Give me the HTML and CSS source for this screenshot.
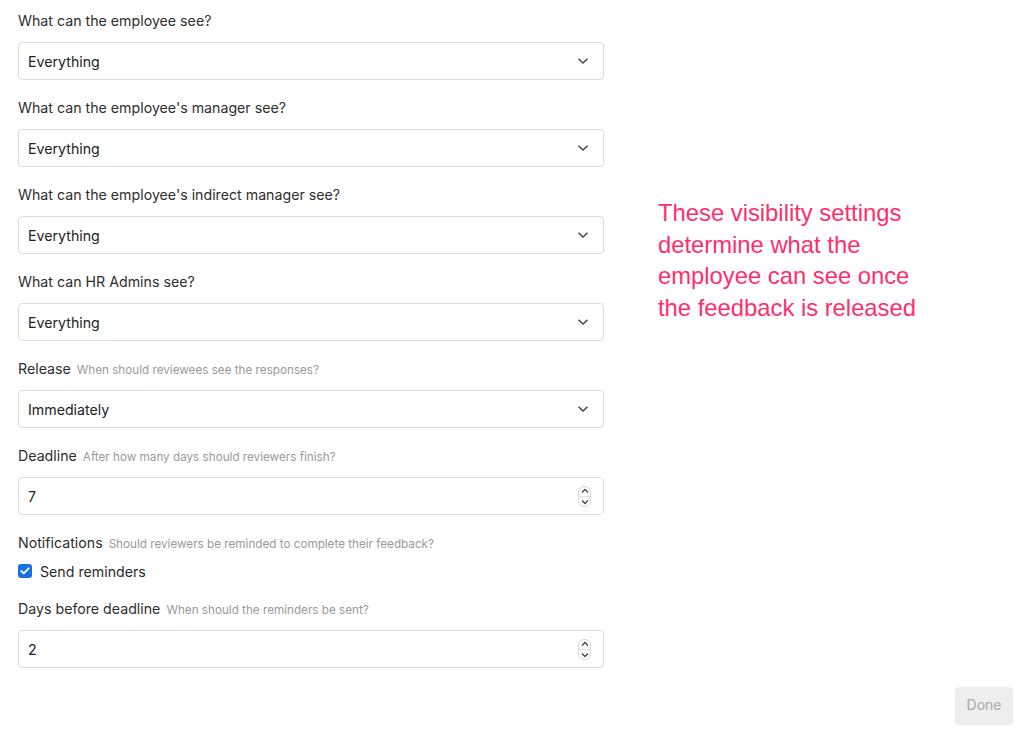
FILE: index.html
```html
<!DOCTYPE html>
<html lang="en">
<head>
<meta charset="utf-8">
<title>Visibility settings</title>
<link rel="stylesheet" href="styles.css">
</head>
<body>
<div class="page">
  <div class="main">
    <form class="form">
      <div class="field">
        <div class="label">What can the employee see?</div>
        <div class="control">
          <span class="value">Everything</span>
          <svg class="chev" width="12" height="8" viewBox="0 0 12 8"><path d="M1.5 1.8 6 6 10.5 1.8" fill="none" stroke="#444" stroke-width="1.5"/></svg>
        </div>
      </div>
      <div class="field">
        <div class="label">What can the employee's manager see?</div>
        <div class="control">
          <span class="value">Everything</span>
          <svg class="chev" width="12" height="8" viewBox="0 0 12 8"><path d="M1.5 1.8 6 6 10.5 1.8" fill="none" stroke="#444" stroke-width="1.5"/></svg>
        </div>
      </div>
      <div class="field">
        <div class="label">What can the employee's indirect manager see?</div>
        <div class="control">
          <span class="value">Everything</span>
          <svg class="chev" width="12" height="8" viewBox="0 0 12 8"><path d="M1.5 1.8 6 6 10.5 1.8" fill="none" stroke="#444" stroke-width="1.5"/></svg>
        </div>
      </div>
      <div class="field">
        <div class="label">What can HR Admins see?</div>
        <div class="control">
          <span class="value">Everything</span>
          <svg class="chev" width="12" height="8" viewBox="0 0 12 8"><path d="M1.5 1.8 6 6 10.5 1.8" fill="none" stroke="#444" stroke-width="1.5"/></svg>
        </div>
      </div>
      <div class="field">
        <div class="label">Release <span class="hint">When should reviewees see the responses?</span></div>
        <div class="control">
          <span class="value">Immediately</span>
          <svg class="chev" width="12" height="8" viewBox="0 0 12 8"><path d="M1.5 1.8 6 6 10.5 1.8" fill="none" stroke="#444" stroke-width="1.5"/></svg>
        </div>
      </div>
      <div class="field">
        <div class="label">Deadline <span class="hint">After how many days should reviewers finish?</span></div>
        <div class="control">
          <span class="value">7</span>
          <span class="stepper">
            <svg width="8" height="6" viewBox="0 0 8 6"><path d="M1 4.5 4 1.5 7 4.5" fill="none" stroke="#444" stroke-width="1.3"/></svg>
            <span class="divider"></span>
            <svg width="8" height="6" viewBox="0 0 8 6"><path d="M1 1.5 4 4.5 7 1.5" fill="none" stroke="#444" stroke-width="1.3"/></svg>
          </span>
        </div>
      </div>
      <div class="field notif">
        <div class="label">Notifications <span class="hint">Should reviewers be reminded to complete their feedback?</span></div>
        <div class="check-row">
          <span class="checkbox">
            <svg width="10" height="8" viewBox="0 0 10 8"><path d="M1.3 4 3.8 6.3 8.7 1.3" fill="none" stroke="#fff" stroke-width="1.8" stroke-linecap="round" stroke-linejoin="round"/></svg>
          </span>
          <span class="check-label">Send reminders</span>
        </div>
      </div>
      <div class="field">
        <div class="label">Days before deadline <span class="hint">When should the reminders be sent?</span></div>
        <div class="control">
          <span class="value">2</span>
          <span class="stepper">
            <svg width="8" height="6" viewBox="0 0 8 6"><path d="M1 4.5 4 1.5 7 4.5" fill="none" stroke="#444" stroke-width="1.3"/></svg>
            <span class="divider"></span>
            <svg width="8" height="6" viewBox="0 0 8 6"><path d="M1 1.5 4 4.5 7 1.5" fill="none" stroke="#444" stroke-width="1.3"/></svg>
          </span>
        </div>
      </div>
    </form>
    <p class="note">These visibility settings determine what the employee can see once the feedback is released</p>
  </div>
  <div class="footer">
    <button class="done" type="button">Done</button>
  </div>
</div>
</body>
</html>
```

FILE: styles.css
```css
* { box-sizing: border-box; }
html, body {
  margin: 0;
  padding: 0;
  background: #fff;
}
body {
  font-family: "Inter", "Lato", "Liberation Sans", sans-serif;
  color: #2b2b2b;
}
.page {
  width: 1024px;
  min-height: 743px;
}
.main {
  display: flex;
  align-items: flex-start;
  padding-left: 18px;
}
.form {
  width: 586px;
  padding-top: 11px;
  display: flex;
  flex-direction: column;
}
.field {
  display: flex;
  flex-direction: column;
  margin-bottom: 18px;
}
.label {
  font-size: 14.2px;
  line-height: 20px;
  height: 20px;
  color: #2e2e2e;
  margin-bottom: 11px;
  white-space: nowrap;
}
.hint {
  font-size: 11.7px;
  color: #9a9a9a;
  margin-left: 2px;
}
.control {
  height: 38px;
  border: 1px solid #dcdcdc;
  border-radius: 4px;
  display: flex;
  align-items: center;
  justify-content: space-between;
  padding: 0 14px 0 9px;
  font-size: 14.2px;
  color: #222;
}
.chev { display: block; }
.stepper {
  width: 13px;
  height: 21px;
  border: 1px solid #d8d8d8;
  border-radius: 6px;
  display: flex;
  flex-direction: column;
  align-items: center;
  justify-content: space-around;
  margin-right: -2px;
}
.stepper svg { display: block; }
.divider {
  width: 100%;
  height: 1px;
  background: #dedede;
}
.notif .label { margin-bottom: 8px; }
.check-row {
  display: flex;
  align-items: center;
  height: 20px;
}
.checkbox {
  width: 14px;
  height: 14px;
  border-radius: 3px;
  background: #1672e0;
  display: flex;
  align-items: center;
  justify-content: center;
  margin-right: 8px;
}
.check-label {
  font-size: 14.2px;
  color: #2b2b2b;
}
.note {
  margin: 197px 0 0 54px;
  width: 262px;
  font-family: "Liberation Sans", Arial, sans-serif;
  font-size: 23.8px;
  line-height: 31.5px;
  color: #ff2e6b;
}
.footer {
  display: flex;
  justify-content: flex-end;
  padding: 1px 11px 0 0;
}
.done {
  width: 58px;
  height: 38px;
  border: none;
  border-radius: 4px;
  background: #eeeeee;
  color: #a9a9a9;
  font-family: "Inter", "Lato", "Liberation Sans", sans-serif;
  font-size: 14px;
  padding: 0 0 3px;
}
```
